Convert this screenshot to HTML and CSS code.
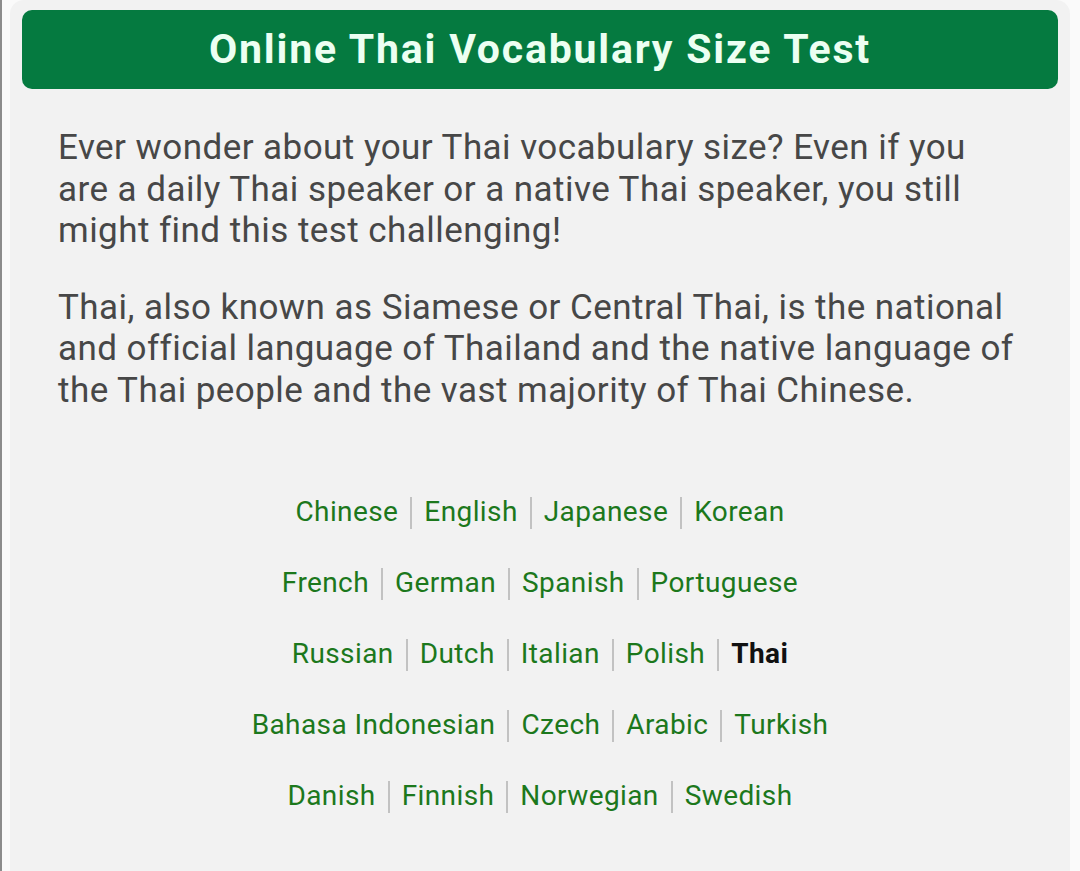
FILE: index.html
```html
<!DOCTYPE html>
<html lang="en-US">
    <head>
        <meta charset="utf-8">
        <title>Online Thai Vocabulary Size Test</title>
        <link rel="stylesheet" href="styles.css">
    </head>
    <body>
        <div class="page">
            <div class="panel">
                <h1 class="title">Online Thai Vocabulary Size Test</h1>

                <div class="intro">
                    <p>Ever wonder about your Thai vocabulary size? Even if you are a daily Thai speaker or a native Thai speaker, you still might find this test challenging!</p>
                    <p>Thai, also known as Siamese or Central Thai, is the national and official language of Thailand and the native language of the Thai people and the vast majority of Thai Chinese.</p>
                </div>

                <div class="langs">
                    <div class="row">
                        <a href="#">Chinese</a><span class="sep"></span><a href="#">English</a><span class="sep"></span><a href="#">Japanese</a><span class="sep"></span><a href="#">Korean</a>
                    </div>
                    <div class="row">
                        <a href="#">French</a><span class="sep"></span><a href="#">German</a><span class="sep"></span><a href="#">Spanish</a><span class="sep"></span><a href="#">Portuguese</a>
                    </div>
                    <div class="row">
                        <a href="#">Russian</a><span class="sep"></span><a href="#">Dutch</a><span class="sep"></span><a href="#">Italian</a><span class="sep"></span><a href="#">Polish</a><span class="sep"></span><b class="current">Thai</b>
                    </div>
                    <div class="row">
                        <a href="#">Bahasa Indonesian</a><span class="sep"></span><a href="#">Czech</a><span class="sep"></span><a href="#">Arabic</a><span class="sep"></span><a href="#">Turkish</a>
                    </div>
                    <div class="row">
                        <a href="#">Danish</a><span class="sep"></span><a href="#">Finnish</a><span class="sep"></span><a href="#">Norwegian</a><span class="sep"></span><a href="#">Swedish</a>
                    </div>
                </div>
            </div>
        </div>
    </body>
</html>
```

FILE: styles.css
```css
html, body {
    height: 100%;
}

body {
    margin: 0;
    background-color: #fafafa;
    font-family: Roboto, "Liberation Sans", sans-serif;
}

/* panel runs past the bottom of the window */
.page {
    box-sizing: border-box;
    min-height: calc(100% + 24px);
    border-left: 2px solid #8c8c8c;
    padding: 0 10px 0 8px;
    display: flex;
}

.panel {
    flex: 1;
    background-color: #f2f2f2;
    border-radius: 14px;
    padding: 10px 12px 0;
}

.title {
    margin: 0;
    background-color: #057a40;
    color: #ecfff2;
    border-radius: 10px;
    text-align: center;
    font-size: 41px;
    font-weight: bold;
    letter-spacing: 1.8px;
    line-height: 79px;
}

.intro {
    padding: 3px 44px 0 36px;
}

.intro p {
    margin: 35px 0;
    color: #474747;
    font-size: 35px;
    letter-spacing: 0.45px;
    line-height: 41.6px;
}

.langs {
    padding-top: 29px;
    text-align: center;
}

.row {
    font-size: 28px;
    letter-spacing: 0.4px;
    line-height: 71px;
}

.row a {
    color: #1c781c;
    text-decoration: none;
}

.current {
    color: #111;
}

.sep {
    display: inline-block;
    width: 0;
    height: 32px;
    border-left: 2px solid #c2c2c2;
    margin: 0 12px;
    vertical-align: middle;
}
```
